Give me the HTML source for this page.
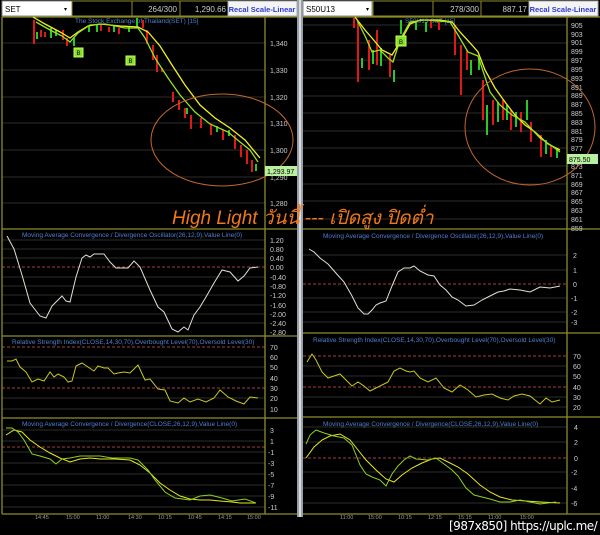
<!DOCTYPE html>
<html><head><meta charset="utf-8"><style>
html,body{margin:0;padding:0;background:#000;width:600px;height:535px;overflow:hidden}
svg{display:block;font-family:"Liberation Sans",sans-serif}
</style></head><body>
<svg width="600" height="535" viewBox="0 0 600 535" xmlns="http://www.w3.org/2000/svg">
<rect width="600" height="535" fill="#000"/>
<rect x="297" y="0" width="6" height="517" fill="#9aa0a8"/>
<rect x="299" y="0" width="2" height="517" fill="#d8dce0"/>

<!-- LEFT HEADER -->
<rect x="2" y="1" width="70" height="15" fill="#fff" stroke="#888"/>
<text x="5" y="12" font-size="8" fill="#000">SET</text>
<text x="64" y="11" font-size="6" fill="#000">▾</text>
<rect x="72" y="1" width="60" height="15" fill="#000" stroke="#8a8a30"/>
<rect x="132" y="1" width="48" height="15" fill="#000" stroke="#8a8a30"/>
<text x="177" y="12" font-size="8" fill="#ccc" text-anchor="end">264/300</text>
<rect x="180" y="1" width="48" height="15" fill="#000" stroke="#8a8a30"/>
<text x="226" y="12" font-size="8" fill="#ccc" text-anchor="end">1,290.66</text>
<rect x="228" y="1" width="69" height="15" fill="#f4f4f4" stroke="#aaa"/>
<text x="262" y="12" font-size="7.5" fill="#2a3ad0" text-anchor="middle" font-weight="bold">Recal Scale-Linear</text>

<!-- RIGHT HEADER -->
<rect x="303" y="1" width="69" height="15" fill="#fff" stroke="#888"/>
<text x="306" y="12" font-size="8" fill="#000">S50U13</text>
<text x="366" y="11" font-size="6" fill="#000">▾</text>
<rect x="373" y="1" width="60" height="15" fill="#000" stroke="#8a8a30"/>
<rect x="433" y="1" width="48" height="15" fill="#000" stroke="#8a8a30"/>
<text x="479" y="12" font-size="8" fill="#ccc" text-anchor="end">278/300</text>
<rect x="481" y="1" width="48" height="15" fill="#000" stroke="#8a8a30"/>
<text x="527" y="12" font-size="8" fill="#ccc" text-anchor="end">887.17</text>
<rect x="529" y="1" width="69" height="15" fill="#f4f4f4" stroke="#aaa"/>
<text x="563" y="12" font-size="7.5" fill="#2a3ad0" text-anchor="middle" font-weight="bold">Recal Scale-Linear</text>

<!-- LEFT GRIDS -->
<g stroke="#2c2c2c" stroke-width="1">
<line x1="2" y1="43" x2="265" y2="43"/><line x1="2" y1="70" x2="265" y2="70"/><line x1="2" y1="97" x2="265" y2="97"/>
<line x1="2" y1="123" x2="265" y2="123"/><line x1="2" y1="150" x2="265" y2="150"/><line x1="2" y1="177" x2="265" y2="177"/><line x1="2" y1="203" x2="265" y2="203"/>
<line x1="2" y1="240" x2="265" y2="240"/><line x1="2" y1="249" x2="265" y2="249"/><line x1="2" y1="258" x2="265" y2="258"/><line x1="2" y1="277" x2="265" y2="277"/>
<line x1="2" y1="286" x2="265" y2="286"/><line x1="2" y1="295" x2="265" y2="295"/><line x1="2" y1="305" x2="265" y2="305"/><line x1="2" y1="314" x2="265" y2="314"/><line x1="2" y1="323" x2="265" y2="323"/>
<line x1="2" y1="357" x2="265" y2="357"/><line x1="2" y1="367" x2="265" y2="367"/><line x1="2" y1="378" x2="265" y2="378"/><line x1="2" y1="398" x2="265" y2="398"/><line x1="2" y1="409" x2="265" y2="409"/>
<line x1="2" y1="430" x2="265" y2="430"/><line x1="2" y1="441" x2="265" y2="441"/><line x1="2" y1="452" x2="265" y2="452"/><line x1="2" y1="463" x2="265" y2="463"/><line x1="2" y1="474" x2="265" y2="474"/><line x1="2" y1="485" x2="265" y2="485"/><line x1="2" y1="496" x2="265" y2="496"/><line x1="2" y1="507" x2="265" y2="507"/>
</g>
<!-- RIGHT GRIDS -->
<g stroke="#2c2c2c" stroke-width="1">
<line x1="303" y1="25" x2="567" y2="25"/><line x1="303" y1="43" x2="567" y2="43"/><line x1="303" y1="60" x2="567" y2="60"/><line x1="303" y1="78" x2="567" y2="78"/><line x1="303" y1="96" x2="567" y2="96"/><line x1="303" y1="113" x2="567" y2="113"/><line x1="303" y1="131" x2="567" y2="131"/><line x1="303" y1="148" x2="567" y2="148"/><line x1="303" y1="166" x2="567" y2="166"/><line x1="303" y1="184" x2="567" y2="184"/><line x1="303" y1="201" x2="567" y2="201"/><line x1="303" y1="219" x2="567" y2="219"/>
<line x1="303" y1="255" x2="567" y2="255"/><line x1="303" y1="270" x2="567" y2="270"/><line x1="303" y1="298" x2="567" y2="298"/><line x1="303" y1="312" x2="567" y2="312"/><line x1="303" y1="322" x2="567" y2="322"/>
<line x1="303" y1="366" x2="567" y2="366"/><line x1="303" y1="376" x2="567" y2="376"/><line x1="303" y1="397" x2="567" y2="397"/><line x1="303" y1="407" x2="567" y2="407"/>
<line x1="303" y1="427" x2="567" y2="427"/><line x1="303" y1="442" x2="567" y2="442"/><line x1="303" y1="472" x2="567" y2="472"/><line x1="303" y1="488" x2="567" y2="488"/><line x1="303" y1="503" x2="567" y2="503"/>
</g>

<g stroke="#a04040" stroke-width="1" stroke-dasharray="3,2">
<line x1="2" y1="267" x2="265" y2="267"/><line x1="2" y1="347" x2="265" y2="347"/><line x1="2" y1="388" x2="265" y2="388"/><line x1="2" y1="447" x2="265" y2="447"/>
<line x1="303" y1="284" x2="567" y2="284"/><line x1="303" y1="356" x2="567" y2="356"/><line x1="303" y1="387" x2="567" y2="387"/><line x1="303" y1="458" x2="567" y2="458"/>
</g>

<g stroke="#8c8c2a" stroke-width="1.3" fill="none">
<line x1="2" y1="17" x2="297" y2="17"/><line x1="2" y1="229" x2="297" y2="229"/><line x1="2" y1="336" x2="297" y2="336"/><line x1="2" y1="418" x2="297" y2="418"/><line x1="2" y1="514" x2="297" y2="514"/>
<line x1="265" y1="17" x2="265" y2="514"/><line x1="2" y1="17" x2="2" y2="514"/>
<line x1="303" y1="17" x2="600" y2="17"/><line x1="303" y1="229" x2="600" y2="229"/><line x1="303" y1="333" x2="600" y2="333"/><line x1="303" y1="417" x2="600" y2="417"/><line x1="303" y1="514" x2="600" y2="514"/>
<line x1="567" y1="17" x2="567" y2="514"/>
</g>

<g font-size="7" fill="#ccc">
<text x="270" y="46">1,340</text><text x="270" y="73">1,330</text><text x="270" y="100">1,320</text><text x="270" y="126">1,310</text><text x="270" y="153">1,300</text><text x="270" y="180">1,290</text><text x="270" y="206">1,280</text>
<text x="270" y="243">1.20</text><text x="270" y="252">0.80</text><text x="270" y="261">0.40</text><text x="270" y="270">0.00</text><text x="270" y="280">-0.40</text><text x="270" y="289">-0.80</text><text x="270" y="298">-1.20</text><text x="270" y="308">-1.60</text><text x="270" y="317">-2.00</text><text x="270" y="326">-2.40</text><text x="270" y="335">-2.80</text>
<text x="270" y="350">70</text><text x="270" y="360">60</text><text x="270" y="370">50</text><text x="270" y="381">40</text><text x="270" y="391">30</text><text x="270" y="401">20</text><text x="270" y="412">10</text>
<text x="270" y="433">3</text><text x="270" y="444">1</text><text x="268" y="455">-1</text><text x="268" y="466">-3</text><text x="268" y="477">-5</text><text x="268" y="488">-7</text><text x="268" y="499">-9</text><text x="268" y="510">-11</text>
</g>
<g font-size="7" fill="#ccc">
<text x="571" y="28">905</text><text x="571" y="37">903</text><text x="571" y="45">901</text><text x="571" y="54">899</text><text x="571" y="63">897</text><text x="571" y="72">895</text><text x="571" y="81">893</text><text x="571" y="90">891</text><text x="571" y="98">889</text><text x="571" y="107">887</text><text x="571" y="116">885</text><text x="571" y="125">883</text><text x="571" y="134">881</text><text x="571" y="142">879</text><text x="571" y="151">877</text><text x="571" y="169">873</text><text x="571" y="178">871</text><text x="571" y="187">869</text><text x="571" y="195">867</text><text x="571" y="204">865</text><text x="571" y="213">863</text><text x="571" y="222">861</text><text x="571" y="231">859</text>
<text x="573" y="258">2</text><text x="573" y="273">1</text><text x="573" y="287">0</text><text x="571" y="301">-1</text><text x="571" y="315">-2</text><text x="571" y="325">-3</text>
<text x="573" y="359">70</text><text x="573" y="369">60</text><text x="573" y="379">50</text><text x="573" y="390">40</text><text x="573" y="400">30</text><text x="573" y="410">20</text>
<text x="574" y="430">4</text><text x="574" y="445">2</text><text x="574" y="461">0</text><text x="571" y="475">-2</text><text x="571" y="491">-4</text><text x="571" y="506">-6</text>
</g>

<g font-size="6.5" fill="#4f7fd0">
<text x="75" y="23">The Stock Exchange of Thailand(SET) [15]</text>
<text x="22" y="237">Moving Average Convergence / Divergence Oscillator(26,12,9),Value Line(0)</text>
<text x="12" y="344">Relative Strength Index(CLOSE,14,30,70),Overbought Level(70),Oversold Level(30)</text>
<text x="22" y="426">Moving Average Convergence / Divergence(CLOSE,26,12,9),Value Line(0)</text>
<text x="405" y="23">S50U13 S&amp;T [15]</text>
<text x="323" y="238">Moving Average Convergence / Divergence Oscillator(26,12,9),Value Line(0)</text>
<text x="313" y="342">Relative Strength Index(CLOSE,14,30,70),Overbought Level(70),Oversold Level(30)</text>
<text x="323" y="426">Moving Average Convergence / Divergence(CLOSE,26,12,9),Value Line(0)</text>
</g>

<g>
<g fill="#e01818">
<rect x="33" y="20" width="2" height="24"/><rect x="40" y="30" width="2" height="7"/><rect x="44" y="32" width="2" height="5"/><rect x="62" y="30" width="2" height="10"/><rect x="66" y="38" width="2" height="8"/>
<rect x="100" y="25" width="2" height="6"/><rect x="108" y="27" width="2" height="5"/><rect x="118" y="28" width="2" height="6"/><rect x="142" y="20" width="2" height="8"/>
<rect x="146" y="30" width="2" height="14"/><rect x="152" y="45" width="2" height="15"/><rect x="156" y="55" width="2" height="17"/><rect x="161" y="68" width="2" height="4"/>
<rect x="172" y="92" width="2" height="10"/><rect x="178" y="100" width="2" height="10"/><rect x="184" y="108" width="2" height="10"/><rect x="190" y="115" width="2" height="14"/>
<rect x="200" y="118" width="2" height="10"/><rect x="210" y="125" width="2" height="10"/><rect x="222" y="130" width="2" height="10"/><rect x="234" y="135" width="2" height="14"/><rect x="240" y="145" width="2" height="12"/><rect x="246" y="150" width="2" height="14"/><rect x="251" y="160" width="2" height="12"/>
</g>
<g fill="#28c828">
<rect x="36" y="32" width="2" height="7"/><rect x="50" y="28" width="2" height="10"/><rect x="55" y="30" width="2" height="6"/><rect x="73" y="38" width="2" height="8"/><rect x="88" y="26" width="2" height="6"/><rect x="96" y="24" width="2" height="8"/>
<rect x="113" y="26" width="2" height="6"/><rect x="128" y="26" width="2" height="6"/><rect x="136" y="18" width="2" height="10"/><rect x="186" y="108" width="2" height="6"/><rect x="216" y="126" width="2" height="6"/><rect x="228" y="130" width="2" height="6"/><rect x="255" y="164" width="2" height="7"/>
</g>
<polyline fill="none" stroke="#f0f020" stroke-width="1.3" points="33,17 45,24 60,32 70,38 78,32 88,26 100,24 120,26 138,27 148,32 160,46 172,65 185,85 200,105 215,118 230,128 245,140 260,158"/>
<polyline fill="none" stroke="#9ae020" stroke-width="1.3" points="36,22 50,30 62,36 70,42 78,33 90,25 105,24 125,28 138,28 145,38 155,58 168,78 180,95 195,112 210,124 228,132 240,142 250,150 258,162"/>
<rect x="74" y="48" width="9" height="9" fill="#8be02a" stroke="#c0ff60"/><text x="78.5" y="55" font-size="6" fill="#000" text-anchor="middle">B</text>
<rect x="126" y="56" width="9" height="9" fill="#8be02a" stroke="#c0ff60"/><text x="130.5" y="63" font-size="6" fill="#000" text-anchor="middle">B</text>
<ellipse cx="222" cy="140" rx="71" ry="46" fill="none" stroke="#c06830" stroke-width="1"/>
<rect x="265" y="166" width="32" height="10" fill="#b8f0a0"/><text x="267" y="174" font-size="7" fill="#000">1,293.97</text>
</g>

<g>
<g fill="#e01818">
<rect x="353" y="18" width="2" height="10"/><rect x="357" y="22" width="2" height="60"/><rect x="368" y="40" width="2" height="30"/><rect x="376" y="30" width="2" height="35"/><rect x="389" y="55" width="2" height="22"/>
<rect x="430" y="20" width="2" height="8"/><rect x="438" y="22" width="2" height="8"/><rect x="454" y="25" width="2" height="30"/><rect x="460" y="45" width="2" height="50"/><rect x="466" y="50" width="2" height="20"/>
<rect x="482" y="80" width="2" height="40"/><rect x="492" y="100" width="2" height="25"/><rect x="502" y="100" width="2" height="20"/><rect x="510" y="110" width="2" height="20"/><rect x="520" y="112" width="2" height="20"/><rect x="530" y="122" width="2" height="20"/><rect x="540" y="135" width="2" height="22"/><rect x="550" y="145" width="2" height="12"/>
</g>
<g fill="#28c828">
<rect x="361" y="58" width="2" height="10"/><rect x="372" y="50" width="2" height="14"/><rect x="380" y="48" width="2" height="18"/><rect x="393" y="70" width="2" height="12"/><rect x="400" y="20" width="2" height="14"/><rect x="415" y="22" width="2" height="8"/><rect x="425" y="22" width="2" height="10"/>
<rect x="470" y="60" width="2" height="15"/><rect x="478" y="58" width="2" height="12"/><rect x="486" y="105" width="2" height="30"/><rect x="497" y="102" width="2" height="20"/><rect x="506" y="105" width="2" height="15"/><rect x="515" y="112" width="2" height="15"/><rect x="526" y="100" width="2" height="20"/><rect x="545" y="140" width="2" height="14"/><rect x="556" y="148" width="2" height="10"/>
</g>
<polyline fill="none" stroke="#f0f020" stroke-width="1.3" points="355,17 365,30 372,38 382,50 392,55 400,42 410,24 420,20 440,20 452,22 460,32 472,45 478,52 485,70 495,88 505,102 515,115 525,125 535,132 548,144 560,150"/>
<polyline fill="none" stroke="#9ae020" stroke-width="1.3" points="357,20 366,38 372,52 380,50 388,58 393,62 400,40 410,22 425,20 450,22 458,35 468,52 478,56 490,92 500,105 512,115 525,122 540,138 552,146 560,152"/>
<rect x="396" y="36" width="10" height="10" fill="#8be02a" stroke="#c0ff60"/><text x="401" y="44" font-size="6" fill="#000" text-anchor="middle">B</text>
<ellipse cx="530" cy="127" rx="65" ry="58" fill="none" stroke="#c06830" stroke-width="1"/>
<rect x="567" y="154" width="31" height="10" fill="#b8f0a0"/><text x="569" y="162" font-size="7" fill="#000">875.50</text>
</g>

<polyline fill="none" stroke="#e0e0d0" stroke-width="1" points="7,236 14,249 22,275 30,303 40,316 46,318 52,306 58,300 62,296 66,301 70,302 76,277 82,258 86,255 90,257 94,254 104,254 110,262 116,268 128,268 134,261 140,267 150,290 158,307 164,312 172,329 178,332 184,327 188,330 194,315 200,307 206,297 214,283 222,270 230,272 238,281 244,276 250,268 258,267"/>
<polyline fill="none" stroke="#c8c820" stroke-width="1" points="7,361 12,361 16,359 20,367 26,372 32,382 38,379 44,381 50,372 54,377 58,374 64,377 68,382 72,381 76,366 82,363 88,367 94,371 98,366 104,368 108,368 114,374 118,373 124,372 130,373 138,365 145,380 150,379 158,389 165,390 170,401 178,403 184,398 190,402 198,399 206,402 214,398 220,390 228,397 236,401 244,404 250,397 258,398"/>
<polyline fill="none" stroke="#e8e820" stroke-width="1" points="6,435 14,430 22,432 30,440 40,447 50,453 60,458 70,462 80,459 90,458 100,459 115,459 130,460 140,465 150,473 160,483 170,490 180,496 190,499 200,500 210,500 220,501 232,502 240,503 256,503"/>
<polyline fill="none" stroke="#90d020" stroke-width="1" points="6,428 12,428 18,432 24,440 32,454 40,456 50,459 56,464 62,459 70,458 80,456 90,456 100,456 112,458 130,458 138,460 148,470 155,480 165,492 175,498 190,500 200,496 210,495 222,498 232,501 245,499 256,503"/>

<polyline fill="none" stroke="#e0e0d0" stroke-width="1" points="309,249 314,252 320,258 328,264 335,272 344,282 352,296 358,308 364,314 368,314 372,310 376,305 380,303 386,301 392,286 398,272 404,268 410,268 414,266 420,271 428,275 434,276 440,285 446,290 452,297 458,300 466,306 474,305 482,300 490,296 498,292 504,291 510,289 520,290 530,292 540,287 550,288 560,286"/>
<polyline fill="none" stroke="#c8c820" stroke-width="1" points="307,362 312,354 316,360 322,372 328,378 334,376 340,374 346,380 352,386 358,382 364,386 370,391 376,388 382,385 388,382 394,371 400,368 406,371 410,372 414,371 420,378 428,382 436,378 444,388 452,392 460,385 468,390 476,397 484,395 492,394 500,398 508,400 514,396 522,394 530,396 540,404 546,398 552,402 560,400"/>
<polyline fill="none" stroke="#e8e820" stroke-width="1" points="306,458 314,447 322,440 330,436 340,434 350,440 358,450 366,460 376,470 386,479 394,482 402,475 412,468 422,463 432,459 440,458 448,462 458,467 468,474 480,485 490,492 500,497 512,500 526,501 540,502 560,503"/>
<polyline fill="none" stroke="#90d020" stroke-width="1" points="306,444 310,435 316,430 324,433 334,436 344,438 352,445 360,465 366,474 372,477 380,480 386,486 392,474 398,466 404,460 410,456 416,459 428,460 436,458 444,464 452,470 458,476 466,488 474,495 482,497 490,499 500,502 510,502 520,500 530,502 540,504 556,502"/>

<text x="172" y="224" font-size="19" font-style="italic" fill="#f07818" font-family="'Liberation Sans','Noto Sans CJK SC',sans-serif">High Light วันนี้ --- เปิดสูง ปิดต่ำ</text>

<g font-size="5.5" fill="#999">
<text x="35" y="519">14:45</text><text x="66" y="519">15:00</text><text x="96" y="519">11:00</text><text x="128" y="519">14:30</text><text x="158" y="519">10:15</text><text x="188" y="519">10:45</text><text x="218" y="519">14:15</text><text x="247" y="519">15:00</text>
<text x="340" y="519">11:00</text><text x="368" y="519">15:00</text><text x="398" y="519">10:15</text><text x="428" y="519">12:15</text><text x="458" y="519">15:15</text><text x="488" y="519">11:00</text><text x="520" y="519">15:00</text>
</g>
<text x="449" y="530" font-size="12" fill="#fff" font-family="'DejaVu Sans',sans-serif" letter-spacing="-0.5">[987x850] https://uplc.me/</text>
</svg>
</body></html>
